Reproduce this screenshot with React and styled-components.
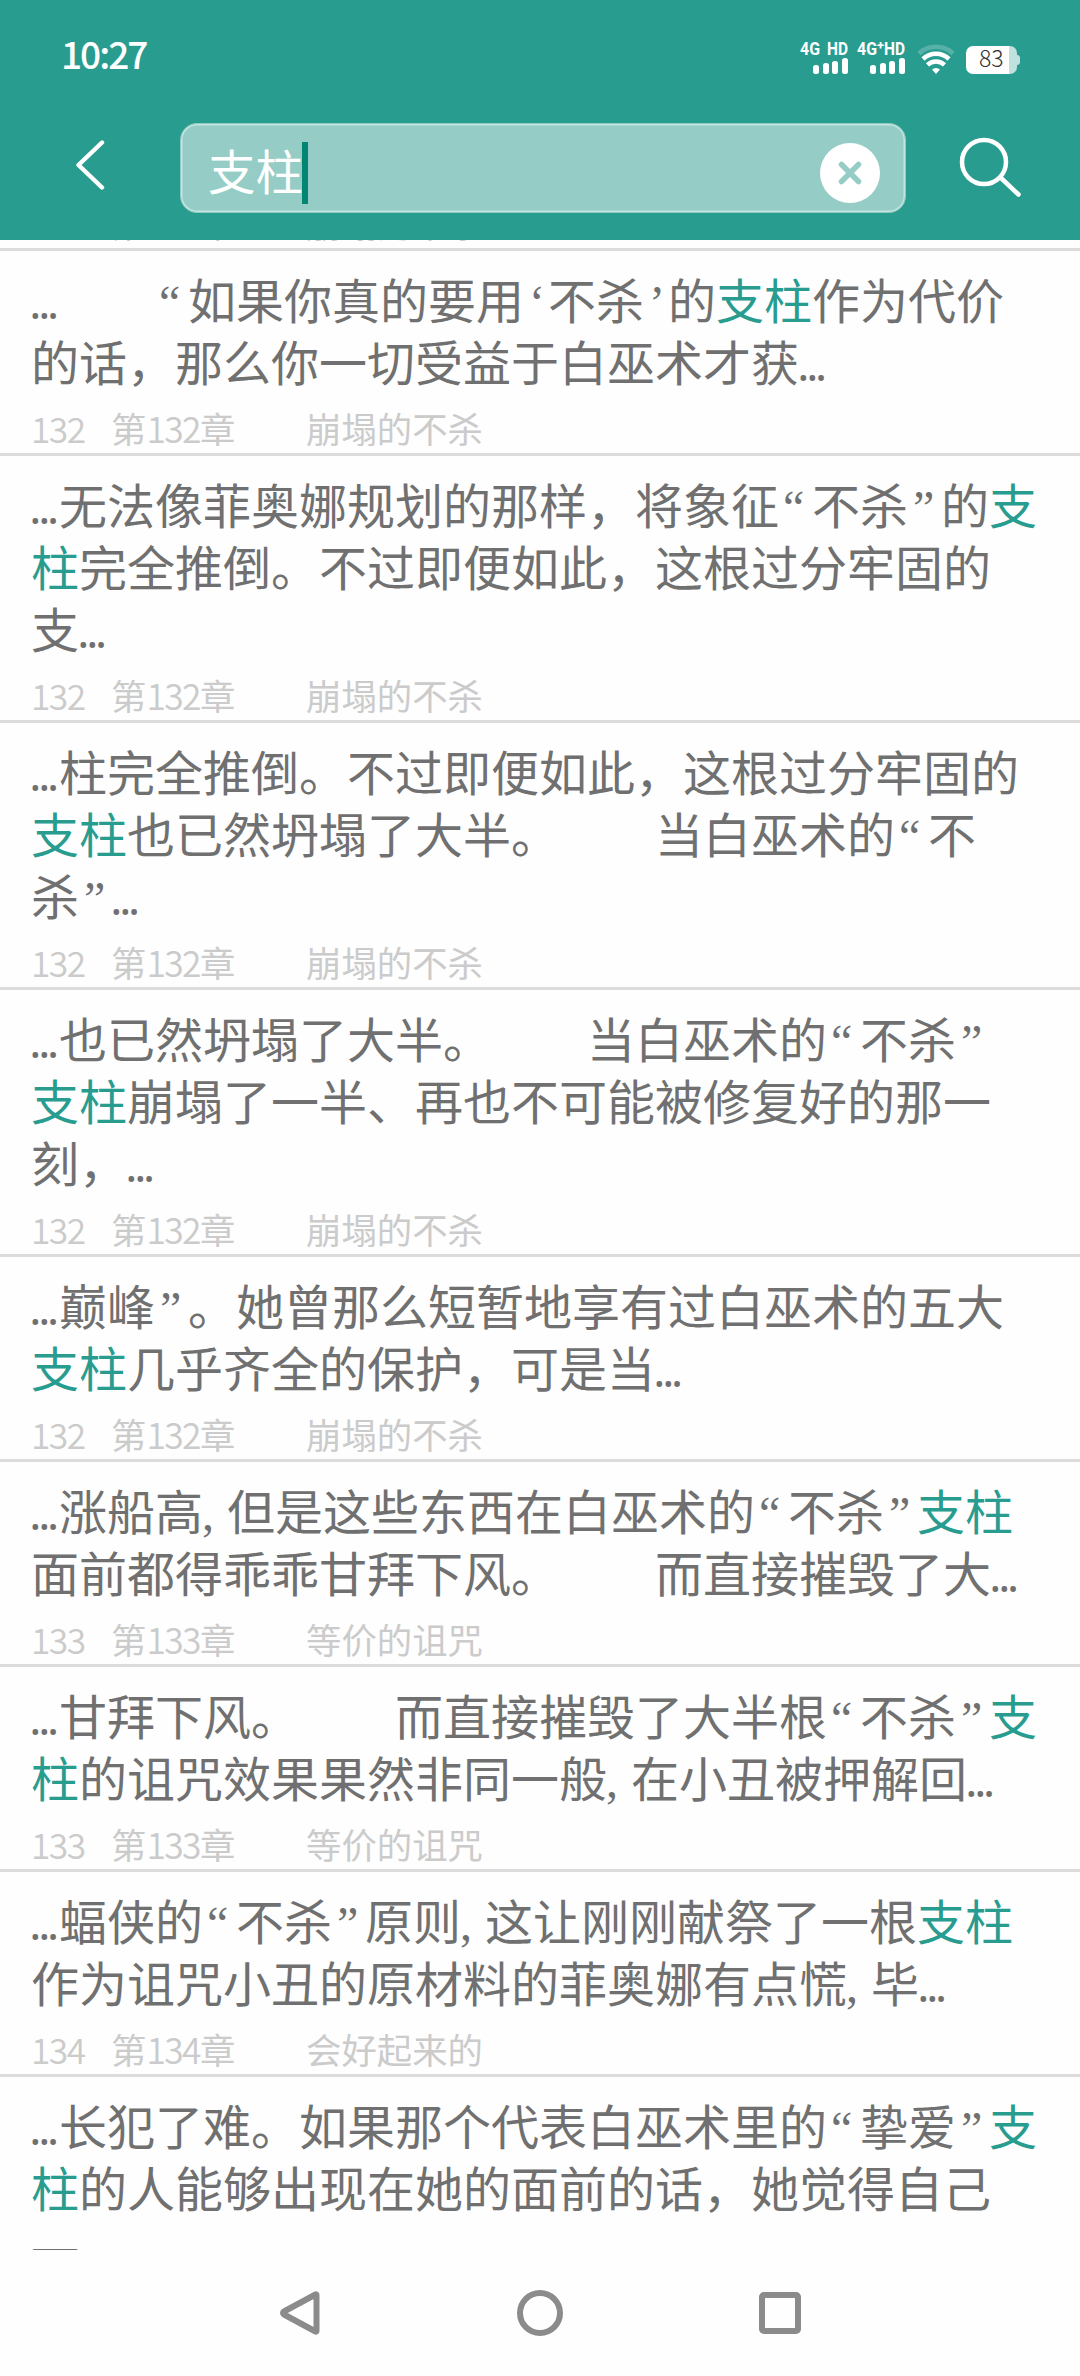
import React from "react";
import styled, { createGlobalStyle } from "styled-components";

const GlobalStyle = createGlobalStyle`
  * {
    box-sizing: border-box;
  }

  body {
    margin: 0;
    background: #fefefe;
    font-family: "Noto Sans CJK SC", sans-serif;
    text-spacing-trim: space-all;
  }
`;

const Screen = styled.div`
  display: flex;
  flex-direction: column;
  width: 1080px;
  height: 2376px;
  overflow: hidden;
`;

const Header = styled.header`
  flex: none;
  height: 240px;
  background: #299c90;
  color: #fff;
`;

const StatusBar = styled.div`
  display: flex;
  justify-content: space-between;
  height: 123px;
  padding: 34px 60px 0 61px;
`;

const Clock = styled.span`
  height: 41px;
  font-size: 37px;
  font-weight: 500;
  line-height: 39px;
  letter-spacing: -2px;
`;

const StatusIcons = styled.div`
  display: flex;
  align-items: flex-start;
`;

const Signal = styled.div`
  display: flex;
  flex-direction: column;
  align-items: flex-end;
  width: 48px;
  margin-right: 9px;
  padding-top: 4px;
`;

const Network = styled.svg`
  display: block;
  width: 48px;
  height: 20px;
  fill: #fff;
  font-family: Roboto, sans-serif;
  font-size: 18.5px;
  font-weight: 700;
`;

const Bars = styled.div`
  display: flex;
  align-items: flex-end;
  gap: 3.6px;
  height: 16px;
`;

const Bar = styled.i`
  width: 6px;
  height: ${({ size }) => size}px;
  border-radius: 2.5px;
  background: #fff;
`;

const Wifi = styled.svg`
  width: 38px;
  height: 32px;
  margin: 9px 11px 0 3px;
`;

const Battery = styled.div`
  display: flex;
  align-items: center;
  margin-top: 12px;
`;

const BatteryBody = styled.div`
  width: 51px;
  height: 28px;
  padding-left: 13px;
  border-radius: 7px;
  background: linear-gradient(to right, #fff 43px, #bfe2de 43px);
  color: #333;
  font-size: 23px;
  font-weight: 300;
  line-height: 23px;
`;

const BatteryTip = styled.i`
  width: 3px;
  height: 10px;
  border-radius: 0 3px 3px 0;
  background: #bfe2de;
`;

const Toolbar = styled.div`
  display: flex;
  align-items: center;
  height: 90px;
`;

const BackIcon = styled.svg`
  flex: none;
  width: 40px;
  height: 56px;
  margin: 0 70px;
`;

const Field = styled.div`
  display: flex;
  align-items: center;
  width: 726px;
  height: 90px;
  padding: 10px 25px 0 27px;
  border: 1px solid #8fcac3;
  border-radius: 17px;
  background: #95cdc6;
  box-shadow: inset 0 0 0 1.5px #c3e4e0;
`;

const Query = styled.span`
  height: 62px;
  font-size: 47.5px;
  line-height: 55px;
`;

const Caret = styled.i`
  width: 6px;
  height: 62px;
  margin-left: -1px;
  background: #038574;
`;

const ClearIcon = styled.svg`
  width: 60px;
  height: 60px;
  margin-left: auto;
`;

const SearchIcon = styled.svg`
  flex: none;
  width: 66px;
  height: 66px;
  margin-left: 51px;
`;

const Results = styled.main`
  height: 2010px;
  overflow: hidden;
`;

const Result = styled.article`
  padding: 16px 0 0 31px;
  border-bottom: 3px solid #dcdcdc;
`;

const PreviousResult = styled(Result)`
  display: flex;
  align-items: flex-end;
  height: 11px;
  overflow: hidden;
  padding-top: 0;
`;

const Excerpt = styled.p`
  margin: 0;
  color: #707070;
  font-size: 48px;
  line-height: 62px;
  white-space: pre;
`;

const Match = styled.em`
  color: #299c90;
  font-style: normal;
`;

const Mark = styled.span`
  display: inline-block;
  width: ${({ width }) => width}px;
  font-family: "Liberation Serif", serif;
  line-height: 1;
  text-indent: ${({ indent }) => indent}px;
`;

const Ellipsis = styled(Mark)`
  font-family: "Open Sans", sans-serif;
  letter-spacing: -3.7px;
  text-indent: -2px;
`;

const Meta = styled.p`
  display: flex;
  height: 62px;
  margin: 0;
  padding-top: 12px;
  color: #cbcbcb;
  font-size: 35.4px;
  line-height: 50px;
  white-space: pre;
`;

const Digits = styled.span`
  font-weight: 350;
  letter-spacing: -1.6px;
`;

const Index = styled(Digits)`
  width: 80px;
`;

const NavBar = styled.nav`
  display: flex;
  justify-content: space-between;
  align-items: center;
  height: 126px;
  padding: 0 274px;
`;

const NavIcon = styled.svg`
  width: 52px;
  height: 52px;
  fill: none;
  stroke: #8b8b8b;
  stroke-width: 6;
  stroke-linejoin: round;
`;

const results = [
  {
    chapter: 132,
    title: "崩塌的不杀",
    text: "...\u3000\u3000“如果你真的要用‘不杀’的支柱作为代价\n的话，那么你一切受益于白巫术才获...",
  },
  {
    chapter: 132,
    title: "崩塌的不杀",
    text: "...无法像菲奥娜规划的那样，将象征“不杀”的支\n柱完全推倒。不过即便如此，这根过分牢固的\n支...",
  },
  {
    chapter: 132,
    title: "崩塌的不杀",
    text: "...柱完全推倒。不过即便如此，这根过分牢固的\n支柱也已然坍塌了大半。\u3000\u3000当白巫术的“不\n杀”...",
  },
  {
    chapter: 132,
    title: "崩塌的不杀",
    text: "...也已然坍塌了大半。\u3000\u3000当白巫术的“不杀”\n支柱崩塌了一半、再也不可能被修复好的那一\n刻，...",
  },
  {
    chapter: 132,
    title: "崩塌的不杀",
    text: "...巅峰”。她曾那么短暂地享有过白巫术的五大\n支柱几乎齐全的保护，可是当...",
  },
  {
    chapter: 133,
    title: "等价的诅咒",
    text: "...涨船高,但是这些东西在白巫术的“不杀”支柱\n面前都得乖乖甘拜下风。\u3000\u3000而直接摧毁了大...",
  },
  {
    chapter: 133,
    title: "等价的诅咒",
    text: "...甘拜下风。\u3000\u3000而直接摧毁了大半根“不杀”支\n柱的诅咒效果果然非同一般,在小丑被押解回...",
  },
  {
    chapter: 134,
    title: "会好起来的",
    text: "...蝠侠的“不杀”原则,这让刚刚献祭了一根支柱\n作为诅咒小丑的原材料的菲奥娜有点慌,毕...",
  },
  {
    chapter: 134,
    title: "会好起来的",
    text: "...长犯了难。如果那个代表白巫术里的“挚爱”支\n柱的人能够出现在她的面前的话，她觉得自己\n一...",
  },
];

const MARKS = {
  "“": { width: 33, indent: 4 },
  "”": { width: 33, indent: 5 },
  "‘": { width: 24, indent: 5 },
  "’": { width: 24, indent: 5 },
  ",": { width: 24, indent: -1 },
};

// The keyword may be broken over two lines.
const renderText = (text) =>
  text.split(/(支\n?柱|\.\.\.|[“”‘’,])/).map((part, i) => {
    if (part === "...") {
      return (
        <Ellipsis key={i} width={28}>
          {part}
        </Ellipsis>
      );
    }
    if (MARKS[part]) {
      return (
        <Mark key={i} {...MARKS[part]}>
          {part}
        </Mark>
      );
    }
    if (/^支\n?柱$/.test(part)) {
      return <Match key={i}>{part}</Match>;
    }
    return part;
  });

const ChapterLine = ({ chapter, title }) => (
  <Meta>
    <Index>{chapter}</Index>
    <span>
      第<Digits>{chapter}</Digits>章{"\u3000\u3000"}
      {title}
    </span>
  </Meta>
);

const SignalIcon = ({ plus }) => (
  <Signal>
    <Network>
      <text x="0" y="17" textLength="20" lengthAdjust="spacingAndGlyphs">
        4G
      </text>
      {plus && (
        <text x="20" y="12" fontSize="13">
          +
        </text>
      )}
      <text x="27" y="17" textLength="21" lengthAdjust="spacingAndGlyphs">
        HD
      </text>
    </Network>
    <Bars>
      {[9, 11, 13.5, 16].map((size) => (
        <Bar key={size} size={size} />
      ))}
    </Bars>
  </Signal>
);

const App = () => (
  <Screen>
    <GlobalStyle />
    <Header>
      <StatusBar>
        <Clock>10:27</Clock>
        <StatusIcons>
          <SignalIcon />
          <SignalIcon plus />
          <Wifi viewBox="0 0 38 32" fill="none" stroke="#fff" strokeWidth="4.5">
            <path d="M2 10.5a25 25 0 0 1 34 0" opacity="0.22" />
            <path d="M6 16a19 19 0 0 1 26 0" />
            <path d="M10.5 21.8a12.5 12.5 0 0 1 17 0" />
            <path d="M15 26.5q4-3 8 0L19 31z" fill="#fff" stroke="none" />
          </Wifi>
          <Battery>
            <BatteryBody>83</BatteryBody>
            <BatteryTip />
          </Battery>
        </StatusIcons>
      </StatusBar>
      <Toolbar>
        <BackIcon
          viewBox="0 0 40 56"
          fill="none"
          stroke="#fff"
          strokeWidth="4.4"
          strokeLinecap="round"
          strokeLinejoin="round"
        >
          <path d="M32 2.500 8.500 25 32 47.500" />
        </BackIcon>
        <Field>
          <Query>支柱</Query>
          <Caret />
          <ClearIcon viewBox="0 0 60 60">
            <circle cx="30" cy="30" r="30" fill="#fff" />
            <path
              d="m21.500 21.500 17 17m0-17-17 17"
              stroke="#95cdc6"
              strokeWidth="5.5"
              strokeLinecap="round"
            />
          </ClearIcon>
        </Field>
        <SearchIcon
          viewBox="0 0 66 66"
          fill="none"
          stroke="#fff"
          strokeWidth="4.5"
          strokeLinecap="round"
        >
          <circle cx="27" cy="27" r="22" />
          <path d="m44 43 17.500 16.500" />
        </SearchIcon>
      </Toolbar>
    </Header>
    <Results>
      <PreviousResult>
        <ChapterLine chapter={132} title="崩塌的不杀" />
      </PreviousResult>
      {results.map(({ chapter, title, text }) => (
        <Result key={text}>
          <Excerpt>{renderText(text)}</Excerpt>
          <ChapterLine chapter={chapter} title={title} />
        </Result>
      ))}
    </Results>
    <NavBar>
      <NavIcon viewBox="0 0 52 52">
        <path d="M42.500 8v36q0 1-1 .5L10 27.500q-2-1.500 0-3L41.500 7.500q1-.5 1 .5z" />
      </NavIcon>
      <NavIcon viewBox="0 0 52 52">
        <circle cx="26" cy="26" r="20" />
      </NavIcon>
      <NavIcon viewBox="0 0 52 52">
        <rect x="8" y="8" width="36" height="36" rx="2" />
      </NavIcon>
    </NavBar>
  </Screen>
);

export default App;
